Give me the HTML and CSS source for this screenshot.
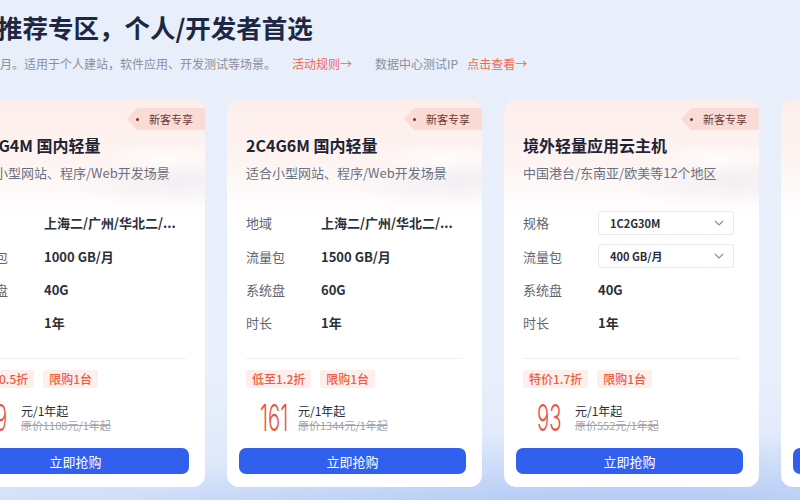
FILE: index.html
```html
<!DOCTYPE html>
<html lang="zh-CN">
  <head>
    <meta charset="UTF-8" />
    <meta name="viewport" content="width=device-width, initial-scale=1.0" />
    <title>轻量推荐专区</title>
    <link rel="stylesheet" href="styles.css">
  </head>
  <body>
    <div class="page">
      <h1 class="page-title">轻量推荐专区，个人/开发者首选</h1>
      <p class="page-desc">
        新用户专享，包年包月。适用于个人建站，软件应用、开发测试等场景。<a href="#">活动规则→</a><span class="ip">数据中心测试IP</span><a class="ip-link" href="#">点击查看→</a>
      </p>

      <div class="cards">
        <div class="card">
          <span class="badge">新客专享</span>
          <h3 class="card-title">2C2G4M 国内轻量</h3>
          <p class="card-desc">适合小型网站、程序/Web开发场景</p>
          <ul class="specs">
            <li><span class="spec-label">地域</span><span class="spec-value">上海二/广州/华北二/...</span></li>
            <li><span class="spec-label">流量包</span><span class="spec-value">1000 GB/月</span></li>
            <li><span class="spec-label">系统盘</span><span class="spec-value">40G</span></li>
            <li><span class="spec-label">时长</span><span class="spec-value">1年</span></li>
          </ul>
          <div class="tags"><span class="tag">低至0.5折</span><span class="tag">限购1台</span></div>
          <div class="price">
            <span class="price-num"><span>59</span></span>
            <div class="price-text"><span>元/1年起</span><del>原价1108元/1年起</del></div>
          </div>
          <button class="buy-btn">立即抢购</button>
        </div>

        <div class="card">
          <span class="badge">新客专享</span>
          <h3 class="card-title">2C4G6M 国内轻量</h3>
          <p class="card-desc">适合小型网站、程序/Web开发场景</p>
          <ul class="specs">
            <li><span class="spec-label">地域</span><span class="spec-value">上海二/广州/华北二/...</span></li>
            <li><span class="spec-label">流量包</span><span class="spec-value">1500 GB/月</span></li>
            <li><span class="spec-label">系统盘</span><span class="spec-value">60G</span></li>
            <li><span class="spec-label">时长</span><span class="spec-value">1年</span></li>
          </ul>
          <div class="tags"><span class="tag">低至1.2折</span><span class="tag">限购1台</span></div>
          <div class="price">
            <span class="price-num"><span>161</span></span>
            <div class="price-text"><span>元/1年起</span><del>原价1344元/1年起</del></div>
          </div>
          <button class="buy-btn">立即抢购</button>
        </div>

        <div class="card">
          <span class="badge">新客专享</span>
          <h3 class="card-title">境外轻量应用云主机</h3>
          <p class="card-desc">中国港台/东南亚/欧美等12个地区</p>
          <ul class="specs">
            <li>
              <span class="spec-label">规格</span>
              <div class="select">1C2G30M
                <svg width="10" height="6" viewBox="0 0 10 6"><polyline points="1,1 5,5 9,1" fill="none" stroke="#8a8f99" stroke-width="1.2"/></svg>
              </div>
            </li>
            <li>
              <span class="spec-label">流量包</span>
              <div class="select">400 GB/月
                <svg width="10" height="6" viewBox="0 0 10 6"><polyline points="1,1 5,5 9,1" fill="none" stroke="#8a8f99" stroke-width="1.2"/></svg>
              </div>
            </li>
            <li><span class="spec-label">系统盘</span><span class="spec-value">40G</span></li>
            <li><span class="spec-label">时长</span><span class="spec-value">1年</span></li>
          </ul>
          <div class="tags"><span class="tag">特价1.7折</span><span class="tag">限购1台</span></div>
          <div class="price">
            <span class="price-num"><span>93</span></span>
            <div class="price-text"><span>元/1年起</span><del>原价552元/1年起</del></div>
          </div>
          <button class="buy-btn">立即抢购</button>
        </div>

        <div class="card">
          <span class="badge">新客专享</span>
          <h3 class="card-title">4C8G10M 国内轻量</h3>
          <p class="card-desc">适合中型网站、电商/小程序场景</p>
          <ul class="specs">
            <li><span class="spec-label">地域</span><span class="spec-value">上海二/广州/华北二/...</span></li>
            <li><span class="spec-label">流量包</span><span class="spec-value">2000 GB/月</span></li>
            <li><span class="spec-label">系统盘</span><span class="spec-value">80G</span></li>
            <li><span class="spec-label">时长</span><span class="spec-value">1年</span></li>
          </ul>
          <div class="tags"><span class="tag">低至1.5折</span><span class="tag">限购1台</span></div>
          <div class="price">
            <span class="price-num"><span>399</span></span>
            <div class="price-text"><span>元/1年起</span><del>原价2688元/1年起</del></div>
          </div>
          <button class="buy-btn">立即抢购</button>
        </div>
      </div>
    </div>
  </body>
</html>
```

FILE: styles.css
```css
body {
  margin: 0;
  width: 800px;
  height: 500px;
  overflow: hidden;
  font-family: "Noto Sans CJK SC", "Noto Sans", sans-serif;
  background:
    radial-gradient(ellipse 520px 90px at 640px 520px, #a9c3f4 0, rgba(169, 195, 244, 0) 100%),
    radial-gradient(ellipse 400px 60px at 200px 520px, #c7d8f8 0, rgba(199, 216, 248, 0) 100%),
    linear-gradient(180deg, #e8eefa 0, #e9effb 75%, #dbe6fa 100%);
}
.page {
  margin-left: -50px;
  padding-top: 9px;
}
.page-title {
  margin: 0 0 0 -4px;
  font-size: 25.5px;
  line-height: 36px;
  font-weight: 700;
  color: #1d2742;
  white-space: nowrap;
}
.page-desc {
  margin: 10px 0 0 -58px;
  font-size: 12px;
  line-height: 18px;
  color: #8b909a;
  white-space: nowrap;
}
.page-desc a {
  margin-left: 16px;
  color: #f2694f;
  text-decoration: none;
}
.page-desc .ip {
  margin-left: 23px;
}
.page-desc .ip-link {
  margin-left: 9px;
}

/* product cards */
.cards {
  display: flex;
  gap: 22px;
  margin-top: 27px;
}
.card {
  position: relative;
  flex: 0 0 255px;
  width: 255px;
  min-width: 0;
  height: 387px;
  box-sizing: border-box;
  padding: 0 19px 13px;
  display: flex;
  flex-direction: column;
  border-radius: 12px;
  background:
    radial-gradient(ellipse 70px 16px at 215px 58px, rgba(255, 255, 255, 0.75) 0, rgba(255, 255, 255, 0) 100%),
    radial-gradient(ellipse 120px 26px at 230px 82px, rgba(236, 232, 240, 0.6) 0, rgba(236, 232, 240, 0) 100%),
    linear-gradient(180deg, #fdeeeb 0, #fdf3f1 55px, #fefbfa 95px, #fff 120px);
}
.badge {
  position: absolute;
  top: 8px;
  right: 0;
  height: 22px;
  width: 78px;
  box-sizing: border-box;
  padding-left: 22px;
  font-size: 11px;
  line-height: 22px;
  color: #6b3a33;
  background: #fbdbd6;
  clip-path: polygon(10px 0, 100% 0, 100% 100%, 10px 100%, 0 50%);
}
.badge::before {
  content: "";
  position: absolute;
  left: 9px;
  top: 10px;
  width: 3px;
  height: 3px;
  border-radius: 50%;
  background: #6b3a33;
}
.card-title {
  margin: 35px 0 0;
  font-size: 16px;
  line-height: 20px;
  font-weight: 700;
  color: #1f2433;
  white-space: nowrap;
}
.card-desc {
  margin: 9px 0 0;
  font-size: 13px;
  line-height: 18px;
  color: #6b7080;
  white-space: nowrap;
}
.specs {
  list-style: none;
  margin: 24px 0 0;
  padding: 0 0 18px;
  border-bottom: 1px solid #eff0f3;
}
.specs li {
  display: flex;
  align-items: center;
  height: 33.4px;
  font-size: 13px;
}
.spec-label {
  width: 75px;
  flex-shrink: 0;
  color: #60646f;
}
.spec-value {
  color: #2b2f3a;
  font-weight: 700;
  white-space: nowrap;
}
.select {
  display: flex;
  align-items: center;
  justify-content: space-between;
  width: 136px;
  height: 24px;
  box-sizing: border-box;
  padding: 0 9px 0 11px;
  border: 1px solid #e8eaef;
  border-radius: 3px;
  font-size: 11px;
  font-weight: 700;
  color: #2b2f3a;
}
.tags {
  display: flex;
  gap: 9px;
  margin-top: 11px;
}
.tag {
  height: 18px;
  padding: 0 6px;
  font-size: 12px;
  line-height: 18px;
  font-weight: 500;
  color: #ef5a43;
  background: #fdf0ec;
  border-radius: 2px;
}
.price {
  display: flex;
  align-items: center;
  height: 32px;
  margin-top: 15px;
  padding-left: 14px;
}
.price-num {
  width: 38px;
  flex-shrink: 0;
  height: 30px;
}
.price-num span {
  display: inline-block;
  font-family: Inter, "Liberation Sans", sans-serif;
  font-size: 37px;
  font-weight: 300;
  line-height: 30px;
  color: #e8553f;
  transform: scaleX(0.55);
  transform-origin: left center;
}
.price-text {
  display: flex;
  flex-direction: column;
  gap: 0;
  color: #2b2f3a;
  margin-top: -1px;
}
.price-text span {
  font-size: 12px;
  line-height: 16px;
}
.price-text del {
  font-size: 11px;
  line-height: 13px;
  color: #a0a4ad;
}
.buy-btn {
  margin: 14px 0 0 -7px;
  width: 227px;
  height: 26px;
  border: none;
  border-radius: 7px;
  background: #3160ee;
  color: #fff;
  font-family: inherit;
  font-size: 13px;
  cursor: pointer;
}
```
